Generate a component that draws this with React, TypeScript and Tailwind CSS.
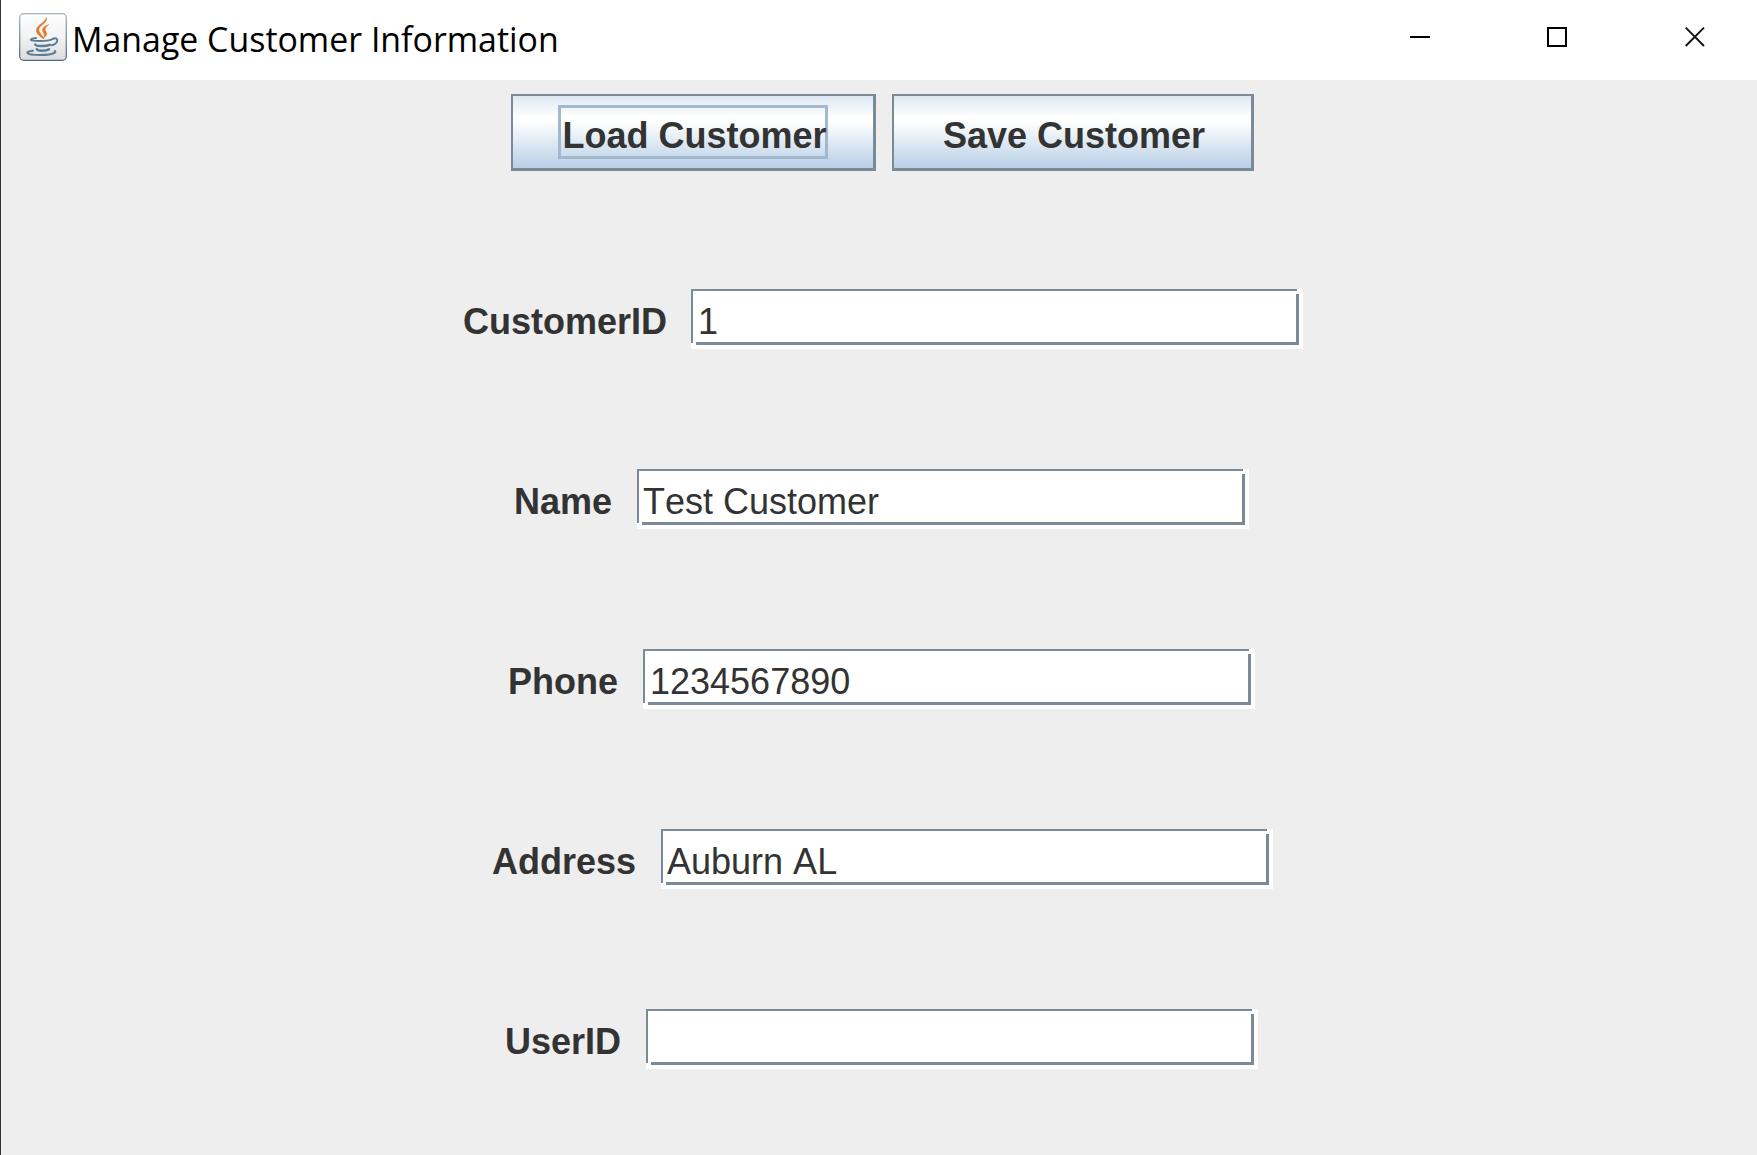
import React from "react";

const fields = [
  { label: "CustomerID", value: "1", row: "pl-[2px]", gap: "mr-6", inset: "pl-[5px]" },
  { label: "Name", value: "Test Customer", row: "pr-px", gap: "mr-[25px]", inset: "pl-1" },
  { label: "Phone", value: "1234567890", row: "pr-px", gap: "mr-[25px]", inset: "pl-[5px]" },
  { label: "Address", value: "Auburn AL", row: "pl-px", gap: "mr-[25px]", inset: "pl-1" },
  { label: "UserID", value: "", row: "pr-px", gap: "mr-[25px]", inset: "pl-1" },
];

function JavaIcon() {
  return (
    <svg className="block h-12 w-12 shrink-0" viewBox="0 0 48 48" fill="none">
      <defs>
        <linearGradient id="tile" x1="0" y1="0" x2="0" y2="1">
          <stop offset="0" stopColor="#fefefe" />
          <stop offset="0.5" stopColor="#f3f3f3" />
          <stop offset="1" stopColor="#dcdcdc" />
        </linearGradient>
        <linearGradient id="edge" x1="0" y1="0" x2="0" y2="1">
          <stop offset="0" stopColor="#a9b3bd" />
          <stop offset="1" stopColor="#566b80" />
        </linearGradient>
      </defs>
      <rect x="0.7" y="0.7" width="46.6" height="46.6" rx="4" fill="url(#tile)" stroke="url(#edge)" strokeWidth="1.3" />
      <path d="M27.3 4.5c2.500 5-8 8-7.500 12.500.300 3 3.600 5 5.200 9-3.800-2-8.200-5.400-7.600-9.400.700-4.800 9.200-7.200 9.900-12.100Z" fill="#e07a2c" stroke="#e07a2c" strokeWidth="0.500" />
      <path d="M29.800 11.500c-4.500 1.700-7 3.900-6.200 6.300.500 1.700 2.200 2.700 1.600 4.900-.200 1-.800 1.900-1.500 2.600 2.700-1.400 4.500-3.300 3.800-5.600-.500-1.600-1.900-2.400-1.300-4.100.400-1.400 1.900-2.500 3.600-4.100Z" fill="#e07a2c" stroke="#e07a2c" strokeWidth="0.500" />
      <g stroke="#5b7c99" strokeLinecap="round">
        <path d="M17 25c-4 .500-5.500 1.300-5 2 1 1.400 16.500 1.400 20.500-.300" strokeWidth="2" />
        <path d="M33.500 26c3.600-1.600 5.300-.300 4.700 1.900-.500 2-2.800 3.600-5.700 4.400" strokeWidth="2" />
        <path d="M16.300 31.400c.300 2.200 10.500 2.200 14.500.500" strokeWidth="2.500" />
        <path d="M17.800 36.100c.700 2.100 8.200 2.200 12.200.300" strokeWidth="2.500" />
        <path d="M14 37.800c-4 .300-6.300 1.500-5.500 2.300 2 2.400 22.500 2.600 27-.300 1.200-.700 1-1.400.200-1.800" strokeWidth="2" />
      </g>
    </svg>
  );
}

function TitleBar() {
  return (
    <header className="flex h-20 items-start justify-between bg-white">
      <div className="flex pt-[13px] pl-[18px]">
        <JavaIcon />
        <h1 className="ml-[5px] h-12 origin-left scale-x-[0.968] text-[35px] leading-[52px] font-normal whitespace-nowrap text-black [font-family:'Open_Sans',sans-serif]">
          Manage Customer Information
        </h1>
      </div>
      <div className="flex gap-[117px] pt-[27px] pr-[52px]">
        <button className="block h-5 w-5" aria-label="Minimize">
          <svg className="block h-5 w-5" viewBox="0 0 20 20">
            <path d="M0 10h20" stroke="#000" strokeWidth="2" />
          </svg>
        </button>
        <button className="block h-5 w-5" aria-label="Maximize">
          <svg className="block h-5 w-5" viewBox="0 0 20 20">
            <path d="M1 1h18v18H1Z" fill="none" stroke="#000" strokeWidth="2" />
          </svg>
        </button>
        <button className="ml-px block h-5 w-5" aria-label="Close">
          <svg className="block h-5 w-5" viewBox="0 0 20 20">
            <path d="M.7.700 19 19M19 .700.700 19" stroke="#111" strokeWidth="1.900" />
          </svg>
        </button>
      </div>
    </header>
  );
}

const metal =
  "flex h-[77px] items-start border-t-2 border-r-3 border-b-3 border-l-2 border-[#7a8a99] bg-[linear-gradient(#dde8f3_0%,#ffffff_30%,#ffffff_35%,#b8cfe5_100%)] text-[36px] font-bold whitespace-nowrap";

function Field({ label, value, row, gap, inset }: (typeof fields)[number]) {
  return (
    <div className={"flex h-15 justify-center " + row}>
      <label className={"text-[36px] leading-[65px] font-bold " + gap}>{label}</label>
      <div className="relative h-15 w-[612px] bg-white">
        <div
          className={
            "h-14 w-[608px] border-t-2 border-r-3 border-b-3 border-l-2 border-[#7a8a99] text-[36px] leading-[61px] whitespace-nowrap [font-kerning:none] " +
            inset
          }
        >
          {value}
        </div>
        <span className="absolute top-[54px] left-0 h-[2px] w-[5px] bg-white" />
        <span className="absolute top-[53px] left-[2px] h-[3px] w-[3px] bg-white" />
        <span className="absolute top-0 left-[606px] h-[5px] w-[2px] bg-white" />
        <span className="absolute top-[2px] left-[605px] h-[3px] w-[3px] bg-white" />
      </div>
    </div>
  );
}

export default function App() {
  return (
    <div className="h-[1155px] w-[1757px] overflow-hidden border-l border-[#333] bg-[#eeeeee] text-[#333333] [font-family:'Liberation_Sans',Arial,sans-serif]">
      <TitleBar />
      <main className="pl-[6px]">
        <div className="flex justify-center gap-4 pt-[14px]">
          <button className={metal + " w-[365px] pt-[9px] pl-[45px]"}>
            <span className="block h-[54px] w-[270px] border-3 border-[#a3b8cc] pl-[2px] text-left leading-[55px]">
              Load Customer
            </span>
          </button>
          <button className={metal + " w-[362px] justify-center pt-[12px] pl-[4px]"}>
            <span className="block leading-[55px]">Save Customer</span>
          </button>
        </div>
        <div className="flex flex-col gap-30 pt-[118px]">
          {fields.map((f) => (
            <Field key={f.label} {...f} />
          ))}
        </div>
      </main>
    </div>
  );
}
